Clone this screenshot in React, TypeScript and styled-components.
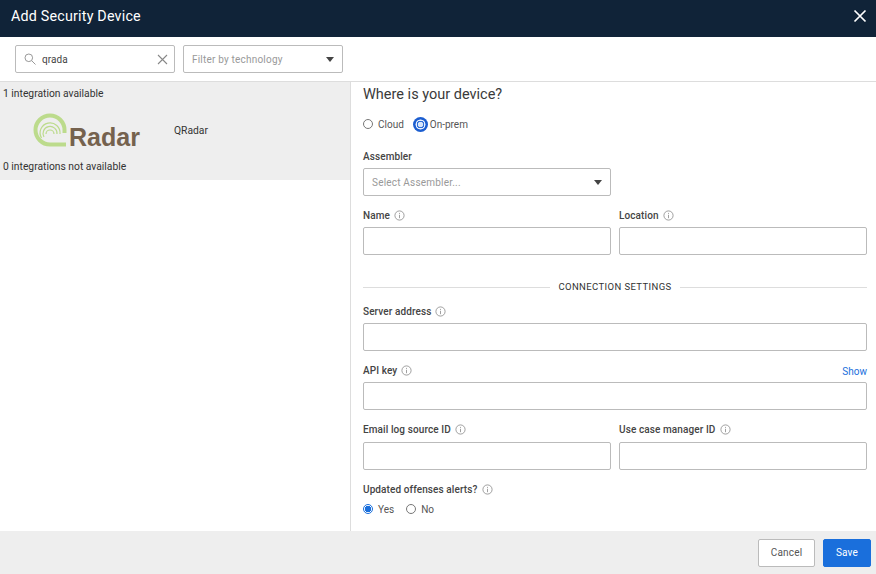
import styled, { createGlobalStyle } from "styled-components";

const GlobalStyle = createGlobalStyle`
  html, body {
    margin: 0;
    padding: 0;
    background: #fff;
  }
  * {
    box-sizing: border-box;
  }
`;

const Wrapper = styled.div`
  width: 876px;
  height: 574px;
  display: flex;
  flex-direction: column;
  overflow: hidden;
  font-family: Roboto, "Liberation Sans", sans-serif;
  color: #333;
`;

const Header = styled.div`
  height: 37px;
  flex: none;
  display: flex;
  align-items: center;
  justify-content: space-between;
  padding: 0 9px 5px 11px;
  background: #102338;
`;

const HeaderTitle = styled.h1`
  margin: 0;
  font-size: 14.3px;
  font-weight: 400;
  letter-spacing: 0.2px;
  color: #fff;
`;

const FilterBar = styled.div`
  height: 45px;
  flex: none;
  display: flex;
  align-items: center;
  gap: 8px;
  padding: 0 15px 1px;
  border-bottom: 1px solid #ddd;
`;

const SearchBox = styled.div`
  width: 160px;
  height: 28px;
  display: flex;
  align-items: center;
  gap: 6px;
  padding: 1px 6px 0 8px;
  border: 1px solid #bbb;
  border-radius: 2px;
  font-size: 10px;
  letter-spacing: 0.1px;
  color: #444;
`;

const SearchText = styled.span`
  flex: 1;
`;

const Dropdown = styled.div<{ $width: number }>`
  width: ${(props) => props.$width}px;
  height: 28px;
  display: flex;
  align-items: center;
  justify-content: space-between;
  padding: 1px 8px 0;
  border: 1px solid #bbb;
  border-radius: 2px;
  font-size: 10px;
  letter-spacing: 0.2px;
  color: #999;
`;

const Caret = styled.span`
  width: 0;
  height: 0;
  border-left: 4.5px solid transparent;
  border-right: 4.5px solid transparent;
  border-top: 5px solid #444;
`;

const Body = styled.div`
  flex: 1;
  min-height: 0;
  display: flex;
`;

const ListPanel = styled.div`
  width: 350px;
  flex: none;
`;

const ListGroup = styled.div`
  height: 98px;
  display: flex;
  flex-direction: column;
  justify-content: space-between;
  padding: 5px 3px 7px;
  background: #eee;
  font-size: 10.3px;
  color: #333;
`;

const Integration = styled.div`
  display: flex;
  align-items: center;
  gap: 30px;
  padding-left: 30px;
`;

const FormPanel = styled.div`
  flex: 1;
  padding: 4px 9px 0 12px;
  border-left: 1px solid #ddd;
`;

const FormTitle = styled.h2`
  margin: 0;
  font-size: 14.5px;
  line-height: 18px;
  font-weight: 400;
  color: #3a3a3a;
`;

const RadioRow = styled.div`
  display: flex;
  align-items: center;
  gap: 12px;
  height: 14px;
  margin-top: 4px;
  font-size: 10px;
  color: #555;
`;

const TopRadios = styled(RadioRow)`
  gap: 9px;
  margin-top: 13px;
  margin-bottom: 18px;
`;

const RadioItem = styled.label`
  display: flex;
  align-items: center;
  gap: 5px;
`;

const Radio = styled.span<{ $checked?: boolean }>`
  width: 10px;
  height: 10px;
  border-radius: 50%;
  border: 1px solid ${(props) => (props.$checked ? "#1a6fdc" : "#777")};
  background: ${(props) => (props.$checked ? "radial-gradient(circle, #1a6fdc 0 3px, #fff 3.5px)" : "#fff")};
`;

const FocusRadio = styled.span`
  width: 15px;
  height: 15px;
  margin-right: -3px;
  border-radius: 50%;
  background: radial-gradient(circle, #d8e6fa 0 2.5px, #2f6fd8 3px 3.6px, #e6effc 4px 4.8px, #1c5ed0 5.2px);
`;

const Row = styled.div`
  display: grid;
  grid-template-columns: 248px 248px;
  gap: 8px;
`;

const Field = styled.div<{ $width?: number }>`
  width: ${(props) => (props.$width ? `${props.$width}px` : "100%")};
  margin-bottom: 12px;
`;

const LabelRow = styled.div<{ $gap?: number }>`
  height: 16px;
  display: flex;
  align-items: center;
  justify-content: space-between;
  padding-bottom: 2px;
  margin-bottom: ${(props) => props.$gap ?? 3}px;
`;

const Label = styled.span`
  display: flex;
  align-items: center;
  gap: 4px;
  font-size: 10px;
  font-weight: 500;
  letter-spacing: 0.1px;
  color: #444;
`;

const ShowLink = styled.a`
  margin-top: 2px;
  font-size: 10px;
  color: #1a6fdc;
`;

const TextInput = styled.div`
  height: 28px;
  border: 1px solid #bbb;
  border-radius: 2px;
  background: #fff;
`;

const SectionDivider = styled.div`
  display: flex;
  align-items: center;
  gap: 8px;
  margin: 14px 0 11px;
  font-size: 9.5px;
  line-height: 12px;
  letter-spacing: 0.4px;
  color: #333;
  &::before,
  &::after {
    content: "";
    flex: 1;
    height: 1px;
    background: #ddd;
  }
`;

const Footer = styled.div`
  height: 43px;
  flex: none;
  display: flex;
  align-items: center;
  justify-content: flex-end;
  gap: 8px;
  padding: 0 5px 0 0;
  background: #eee;
`;

const Button = styled.button<{ $primary?: boolean }>`
  width: ${(props) => (props.$primary ? "48px" : "57px")};
  height: 28px;
  padding: 0;
  border-radius: 2px;
  border: 1px solid ${(props) => (props.$primary ? "#1a6fdc" : "#bbb")};
  background: ${(props) => (props.$primary ? "#1a6fdc" : "#fff")};
  color: ${(props) => (props.$primary ? "#fff" : "#555")};
  font-family: inherit;
  font-size: 10px;
  letter-spacing: 0.2px;
`;

const CloseIcon = () => (
  <svg width="14" height="14" viewBox="0 0 14 14">
    <path d="M1.500 1.500 12.500 12.500M12.500 1.500 1.500 12.500" stroke="#fff" strokeWidth="1.7" />
  </svg>
);

const SearchIcon = () => (
  <svg width="12" height="12" viewBox="0 0 12 12" fill="none" stroke="#999" strokeWidth="1">
    <circle cx="4.8" cy="4.8" r="3.8" />
    <path d="M7.6 7.6 11.5 11.5" />
  </svg>
);

const ClearIcon = () => (
  <svg width="11" height="11" viewBox="0 0 11 11">
    <path d="M1 1 10 10M10 1 1 10" stroke="#888" strokeWidth="1.1" />
  </svg>
);

const InfoIcon = () => (
  <svg width="11" height="11" viewBox="0 0 11 11" fill="none" stroke="#888" strokeWidth="0.8">
    <circle cx="5.5" cy="5.5" r="4.6" />
    <path d="M5.5 4.8V8.2M5.5 2.9V3.900" />
  </svg>
);

const QRadarLogo = () => (
  <svg width="111" height="42" viewBox="0 0 111 42">
    <g fill="none" stroke="#bcdb8c">
      <path d="M33 35.500H17A14.500 14.500 0 1 1 31.500 21V24" strokeWidth="4" />
      <path d="M8.500 29A10 10 0 1 1 27 25" strokeWidth="1.2" />
      <path d="M11 28A7 7 0 1 1 24 25" strokeWidth="1.2" />
      <path d="M13 25A4 4 0 0 1 21 25" strokeWidth="1.2" />
    </g>
    <text x="36" y="37" fontFamily="'Liberation Sans', Arial, sans-serif" fontWeight="700" fontSize="25" textLength="71" lengthAdjust="spacingAndGlyphs" fill="#75624e">
      Radar
    </text>
  </svg>
);

function LabelWithInfo({ text }: { text: string }) {
  return (
    <Label>
      {text} <InfoIcon />
    </Label>
  );
}

function App() {
  return (
    <Wrapper>
      <GlobalStyle />
      <Header>
        <HeaderTitle>Add Security Device</HeaderTitle>
        <CloseIcon />
      </Header>
      <FilterBar>
        <SearchBox>
          <SearchIcon />
          <SearchText>qrada</SearchText>
          <ClearIcon />
        </SearchBox>
        <Dropdown $width={160}>
          Filter by technology
          <Caret />
        </Dropdown>
      </FilterBar>
      <Body>
        <ListPanel>
          <ListGroup>
            <span>1 integration available</span>
            <Integration>
              <QRadarLogo />
              <span>QRadar</span>
            </Integration>
            <span>0 integrations not available</span>
          </ListGroup>
        </ListPanel>
        <FormPanel>
          <FormTitle>Where is your device?</FormTitle>
          <TopRadios>
            <RadioItem>
              <Radio /> Cloud
            </RadioItem>
            <RadioItem>
              <FocusRadio /> On-prem
            </RadioItem>
          </TopRadios>
          <Field $width={248}>
            <LabelRow>
              <Label>Assembler</Label>
            </LabelRow>
            <Dropdown $width={248}>
              Select Assembler...
              <Caret />
            </Dropdown>
          </Field>
          <Row>
            <Field>
              <LabelRow>
                <LabelWithInfo text="Name" />
              </LabelRow>
              <TextInput />
            </Field>
            <Field>
              <LabelRow>
                <LabelWithInfo text="Location" />
              </LabelRow>
              <TextInput />
            </Field>
          </Row>
          <SectionDivider>CONNECTION SETTINGS</SectionDivider>
          <Field>
            <LabelRow>
              <LabelWithInfo text="Server address" />
            </LabelRow>
            <TextInput />
          </Field>
          <Field>
            <LabelRow>
              <LabelWithInfo text="API key" />
              <ShowLink>Show</ShowLink>
            </LabelRow>
            <TextInput />
          </Field>
          <Row>
            <Field>
              <LabelRow $gap={4}>
                <LabelWithInfo text="Email log source ID" />
              </LabelRow>
              <TextInput />
            </Field>
            <Field>
              <LabelRow $gap={4}>
                <LabelWithInfo text="Use case manager ID" />
              </LabelRow>
              <TextInput />
            </Field>
          </Row>
          <LabelRow>
            <LabelWithInfo text="Updated offenses alerts?" />
          </LabelRow>
          <RadioRow>
            <RadioItem>
              <Radio $checked /> Yes
            </RadioItem>
            <RadioItem>
              <Radio /> No
            </RadioItem>
          </RadioRow>
        </FormPanel>
      </Body>
      <Footer>
        <Button>Cancel</Button>
        <Button $primary>Save</Button>
      </Footer>
    </Wrapper>
  );
}

export default App;
